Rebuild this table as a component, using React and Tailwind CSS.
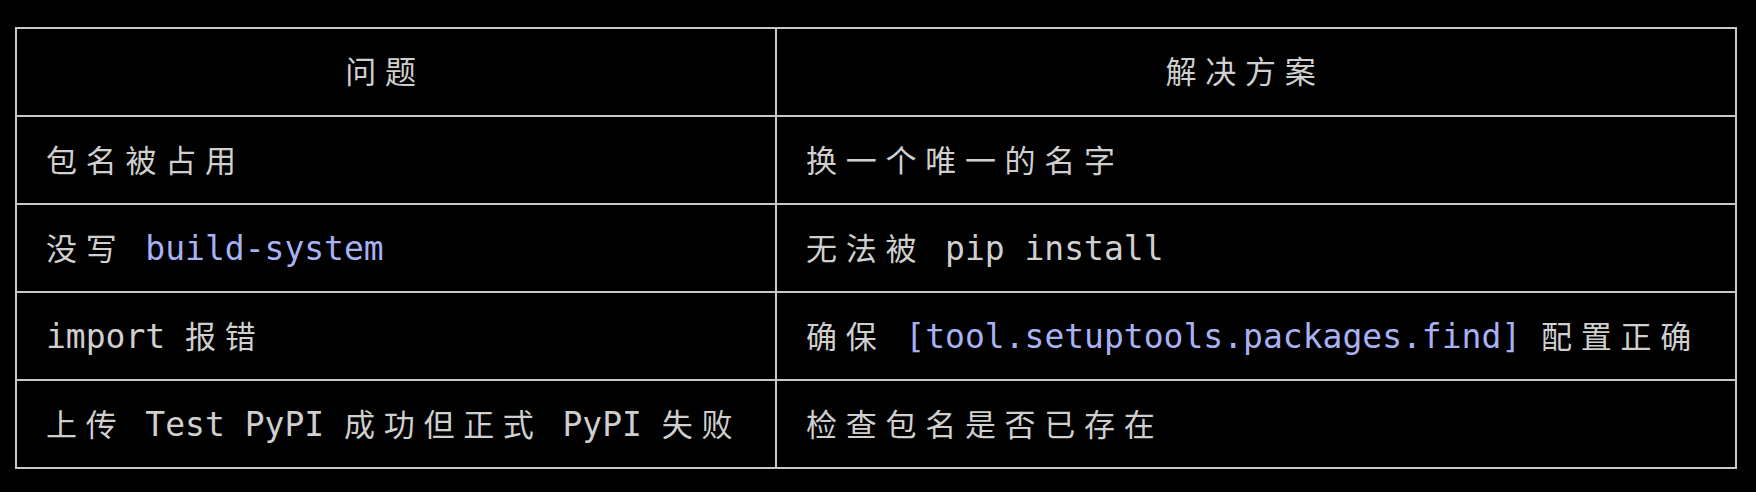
import React from "react";

const CJK = /[\u2e80-\u9fff\uf900-\ufaff\uff00-\uffef]/;

function T({ text }) {
  const parts = [];
  let buf = "";
  [...text].forEach((ch, i) => {
    if (CJK.test(ch)) {
      if (buf) {
        parts.push(buf);
        buf = "";
      }
      parts.push(
        <span key={i} className="inline-block w-[39.73px] text-left text-[31px]">
          {ch}
        </span>
      );
    } else {
      buf += ch;
    }
  });
  if (buf) parts.push(buf);
  return <>{parts}</>;
}

function Code({ children }) {
  return <span className="text-[#a8b1f4]">{children}</span>;
}

const rows = [
  [<T text="包名被占用" />, <T text="换一个唯一的名字" />],
  [
    <>
      <T text="没写 " />
      <Code>build-system</Code>
    </>,
    <T text="无法被 pip install" />,
  ],
  [
    <T text="import 报错" />,
    <>
      <T text="确保 " />
      <Code>[tool.setuptools.packages.find]</Code>
      <T text=" 配置正确" />
    </>,
  ],
  [<T text="上传 Test PyPI 成功但正式 PyPI 失败" />, <T text="检查包名是否已存在" />],
];

export default function App() {
  return (
    <div
      className="w-[1756px] h-[492px] bg-black pt-[27px] pl-[15px] text-[#cfcfcf] text-[33px] leading-none whitespace-pre"
      style={{ fontFamily: '"DejaVu Sans Mono", "Noto Sans CJK SC", monospace' }}
    >
      <div className="grid grid-cols-[760px_960px] w-[1722px] border-t-2 border-l-2 border-[#c8c8c8]">
        <div className="h-[88px] border-r-2 border-b-2 border-[#c8c8c8] flex items-center justify-center pr-[22px]">
          <T text="问题" />
        </div>
        <div className="h-[88px] border-r-2 border-b-2 border-[#c8c8c8] flex items-center justify-center pr-[22px]">
          <T text="解决方案" />
        </div>
        {rows.map((r, i) => (
          <React.Fragment key={i}>
            <div className="h-[88px] border-r-2 border-b-2 border-[#c8c8c8] flex items-center pl-[29px]">
              <span>{r[0]}</span>
            </div>
            <div className="h-[88px] border-r-2 border-b-2 border-[#c8c8c8] flex items-center pl-[29px]">
              <span>{r[1]}</span>
            </div>
          </React.Fragment>
        ))}
      </div>
    </div>
  );
}
